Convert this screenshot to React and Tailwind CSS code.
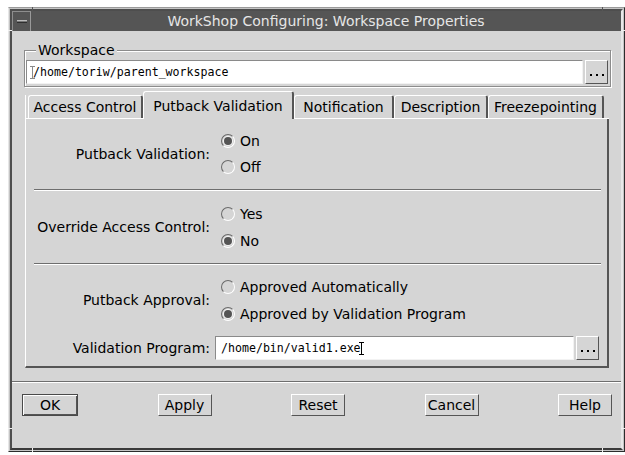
import React from 'react';

// Motif-style "WorkShop Configuring" dialog
const sans = "font-['DejaVu_Sans',sans-serif]";
const mono = "font-['DejaVu_Sans_Mono',monospace]";

function IBeam({ color = '#000' }) {
  return (
    <svg width="5" height="13" viewBox="0 0 5 13" className="shrink-0">
      <path d="M0 0.5h5M0 12.5h5M2.5 0.5v12" stroke={color} strokeWidth="1" fill="none" />
    </svg>
  );
}

function Field({ children, className = '' }) {
  return (
    <div
      className={`flex h-[24px] items-center border border-t-[#8a8a8a] border-l-[#8a8a8a] border-r-[#f2f2f2] border-b-[#f2f2f2] bg-white pl-[5px] ${mono} text-[11.6px] text-black ${className}`}
    >
      {children}
    </div>
  );
}

function DotsButton() {
  return (
    <div className="flex h-[24px] w-[23px] shrink-0 items-end justify-center gap-[4px] border border-t-white border-l-white border-r-[#555] border-b-[#555] pb-[7px]">
      <span className="h-[2px] w-[2px] bg-black" />
      <span className="h-[2px] w-[2px] bg-black" />
      <span className="h-[2px] w-[2px] bg-black" />
    </div>
  );
}

function Radio({ checked, label, h }) {
  return (
    <div className={`flex items-center ${h}`}>
      <span className="flex h-[14px] w-[14px] items-center justify-center rounded-full border border-t-[#6a6a6a] border-l-[#6a6a6a] border-r-white border-b-white">
        {checked && <span className="h-[8px] w-[8px] rounded-full bg-[#545454] ring-1 ring-[#f4f4f4]" />}
      </span>
      <span className="ml-[5px]">{label}</span>
    </div>
  );
}

function RadioRow({ label, options, h }) {
  return (
    <div className="flex items-center">
      <div className="w-[184px] text-right">{label}</div>
      <div className="ml-[11px] flex flex-col">
        {options.map((o) => (
          <Radio key={o.label} label={o.label} checked={o.checked} h={h} />
        ))}
      </div>
    </div>
  );
}

function Separator({ className = '' }) {
  return (
    <div className={`flex flex-col ${className}`}>
      <div className="h-[1px] bg-[#6e6e6e]" />
      <div className="h-[1px] bg-white" />
    </div>
  );
}

function Tab({ label, selected, w }) {
  if (selected) {
    return (
      <div className={`flex h-[28px] items-center justify-center rounded-t-[3px] border-t border-l border-r-2 border-t-white border-l-white border-r-[#555] ${w}`}>
        {label}
      </div>
    );
  }
  return (
    <div className={`flex h-[24px] flex-col ${w}`}>
      <div className="flex flex-1 items-center justify-center rounded-t-[3px] border-t border-l border-r-2 border-t-white border-l-white border-r-[#555]">
        {label}
      </div>
      <div className="h-[1px] bg-white" />
    </div>
  );
}

function Button({ children, isDefault }) {
  return (
    <div
      className={`flex h-[22px] items-center justify-center ${
        isDefault
          ? 'w-[56px] border border-[#4a4a4a] shadow-[inset_1px_1px_0_#ffffff,inset_-1px_-1px_0_#555555]'
          : 'w-[54px] border border-t-white border-l-white border-r-[#555] border-b-[#555]'
      }`}
    >
      {children}
    </div>
  );
}

export default function App() {
  return (
    <div className={`h-[455px] w-[625px] overflow-hidden bg-white pl-[8px] pt-[7px] ${sans} text-[14px] leading-[16px] text-black`}>
      {/* window frame */}
      <div className="relative h-[445px] w-[617px] border border-t-[#9a9a9a] border-l-[#e6e6e6] border-r-[#2c2c2c] border-b-[#2c2c2c] bg-[#c4c4c4] p-[1px]">
        {/* resize corner ticks */}
        <span className="absolute left-[23px] top-[-1px] h-[4px] w-[1px] bg-[#555]" />
        <span className="absolute right-[21px] top-[-1px] h-[4px] w-[1px] bg-[#555]" />
        <span className="absolute bottom-[-1px] left-[23px] h-[4px] w-[1px] bg-[#f0f0f0]" />
        <span className="absolute bottom-[-1px] right-[21px] h-[4px] w-[1px] bg-[#f0f0f0]" />
        <span className="absolute left-[-1px] top-[22px] h-[1px] w-[4px] bg-[#f0f0f0]" />
        <span className="absolute right-[-1px] top-[22px] h-[1px] w-[4px] bg-[#f0f0f0]" />
        <span className="absolute bottom-[22px] left-[-1px] h-[1px] w-[4px] bg-[#f0f0f0]" />
        <span className="absolute bottom-[22px] right-[-1px] h-[1px] w-[4px] bg-[#f0f0f0]" />

        <div className="flex h-full flex-col border-2 border-t-[#4e4e4e] border-l-[#4e4e4e] border-r-[#e8e8e8] border-b-[#3a3a3a] bg-[#d5d5d5]">
          {/* title bar */}
          <div className="flex h-[20px] shrink-0 items-center bg-[#555555]">
            <div className="flex h-full w-[19px] items-center justify-center border-l border-t border-r border-l-[#8e8e8e] border-t-[#8e8e8e] border-r-[#9a9a9a]">
              <span className="h-[3px] w-[10px] border-t border-b border-t-[#bcbcbc] border-b-[#2e2e2e] bg-[#777]" />
            </div>
            <div className="flex-1 text-center text-[#e6e6e6]">WorkShop Configuring: Workspace Properties</div>
          </div>

          {/* Workspace group */}
          <div className="relative ml-[12px] mt-[19px] w-[587px] border border-[#8c8c8c] shadow-[inset_1px_1px_0_#ffffff,1px_1px_0_#ffffff] pl-[1px] pb-[2px] pt-[9px]">
            <span className="absolute left-[11px] top-[-9px] bg-[#d5d5d5] px-[2px]">Workspace</span>
            <div className="flex items-center gap-[2px] pr-[2px]">
              <Field className="flex-1">
                <span className="-ml-[2px] mr-[-2px]">
                  <IBeam color="#8a8a8a" />
                </span>
                <span>/home/toriw/parent_workspace</span>
              </Field>
              <DotsButton />
            </div>
          </div>

          {/* tabs */}
          <div className="ml-[13px] mt-[4px] flex w-[584px] items-end">
            <div className="flex h-[24px] w-[3px] flex-col">
              <div className="flex-1 border-l border-l-white" />
              <div className="h-[1px] bg-white" />
            </div>
            <Tab label="Access Control" w="w-[115px]" />
            <Tab label="Putback Validation" w="w-[151px]" selected />
            <Tab label="Notification" w="w-[100px]" />
            <Tab label="Description" w="w-[94px]" />
            <Tab label="Freezepointing" w="w-[116px]" />
            <div className="flex h-[24px] flex-1 flex-col">
              <div className="flex-1" />
              <div className="h-[1px] bg-white" />
            </div>
          </div>

          {/* tab panel */}
          <div className="ml-[13px] flex w-[584px] flex-col border-l border-r-2 border-b-2 border-l-white border-r-[#555] border-b-[#555] pt-[9px] pb-[6px]">
            <RadioRow
              label="Putback Validation:"
              h="h-[26px]"
              options={[
                { label: 'On', checked: true },
                { label: 'Off', checked: false },
              ]}
            />
            <Separator className="ml-[8px] mr-[6px] mt-[9px]" />
            <div className="mt-[9px]">
              <RadioRow
                label="Override Access Control:"
                h="h-[27px]"
                options={[
                  { label: 'Yes', checked: false },
                  { label: 'No', checked: true },
                ]}
              />
            </div>
            <Separator className="ml-[8px] mr-[6px] mt-[9px]" />
            <div className="mt-[8px]">
              <RadioRow
                label="Putback Approval:"
                h="h-[27px]"
                options={[
                  { label: 'Approved Automatically', checked: false },
                  { label: 'Approved by Validation Program', checked: true },
                ]}
              />
            </div>
            <div className="mt-[9px] flex items-center">
              <div className="w-[184px] text-right">Validation Program:</div>
              <Field className="ml-[5px] w-[359px]">
                <span>/home/bin/valid1.exe</span>
                <span className="-ml-[2px]">
                  <IBeam />
                </span>
              </Field>
              <div className="ml-[2px]">
                <DotsButton />
              </div>
            </div>
          </div>

          {/* bottom separator + buttons */}
          <Separator className="mt-[13px]" />
          <div className="mt-[11px] flex items-center justify-between pl-[10px] pr-[9px]">
            <Button isDefault>OK</Button>
            <Button>Apply</Button>
            <Button>Reset</Button>
            <Button>Cancel</Button>
            <Button>Help</Button>
          </div>
        </div>
      </div>
    </div>
  );
}
